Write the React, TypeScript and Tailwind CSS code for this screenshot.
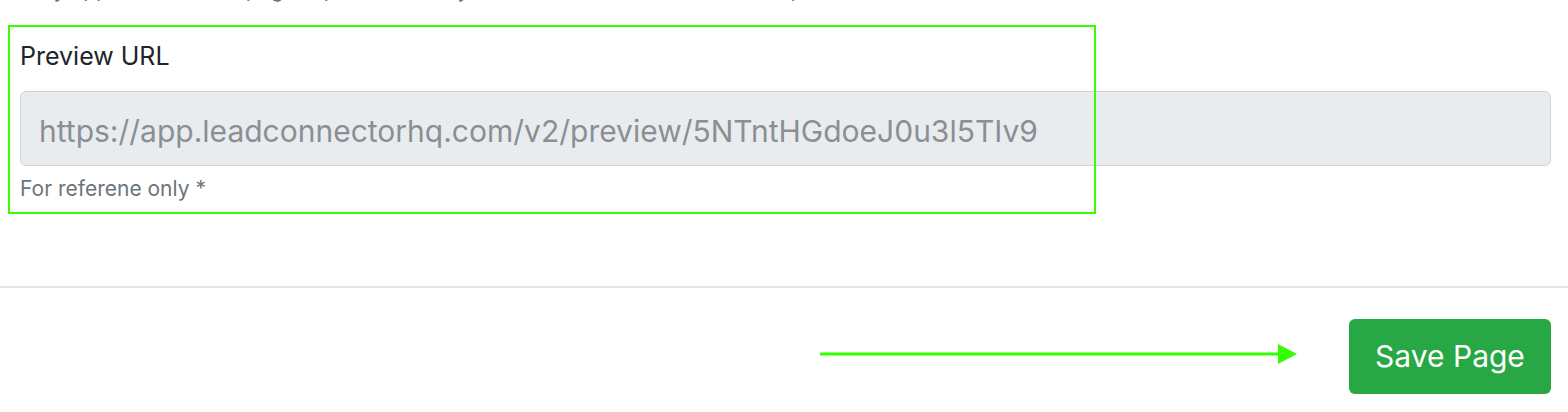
const FONT = "font-['Inter','Liberation_Sans',sans-serif]";

export default function App() {
  return (
    <div className={`relative w-full h-[412px] overflow-hidden bg-white ${FONT}`}>
      {/* previous field's hint, cut off by the top edge */}
      <div className="h-[4px] overflow-hidden">
        <p className="-mt-[22px] pl-[20px] text-[21px] leading-[24px] text-[#6c757d]">
          Only applies when the page is published on your custom domain or funnel step
        </p>
      </div>

      <div className="pl-[20px] pr-[17px] pt-[37px]">
        <label className="block text-[25px] leading-[30px] text-[#212529]">Preview URL</label>
        <input
          readOnly
          disabled
          value="https://app.leadconnectorhq.com/v2/preview/5NTntHGdoeJ0u3l5TIv9"
          className="mt-[20px] block h-[75px] w-full rounded-[6px] border border-[#ced4da] bg-[#e9ecef] px-[18px] pt-[4px] text-[30px] text-[#8a8f94] outline-none"
        />
        <p className="mt-[11px] text-[21px] leading-[24px] text-[#6c757d]">For referene only *</p>
      </div>

      <div className="mt-[85px] h-[2px] bg-[#e3e5e8]" />

      <div className="flex justify-end pr-[17px] pt-[31px]">
        <button className="h-[75px] w-[202px] rounded-[6px] bg-[#28a745] text-[30px] text-white">
          Save Page
        </button>
      </div>

      {/* annotation overlay */}
      <div className="pointer-events-none absolute left-[8px] top-[25px] h-[189px] w-[1088px] border-2 border-[#33ff00]" />
      <svg className="pointer-events-none absolute left-[818px] top-[342px]" width="482" height="24" viewBox="0 0 482 24">
        <line x1="2" y1="12" x2="462" y2="12" stroke="#33ff00" strokeWidth="3" />
        <path d="M460 2 L479 12 L460 22 Z" fill="#33ff00" />
      </svg>
    </div>
  );
}
